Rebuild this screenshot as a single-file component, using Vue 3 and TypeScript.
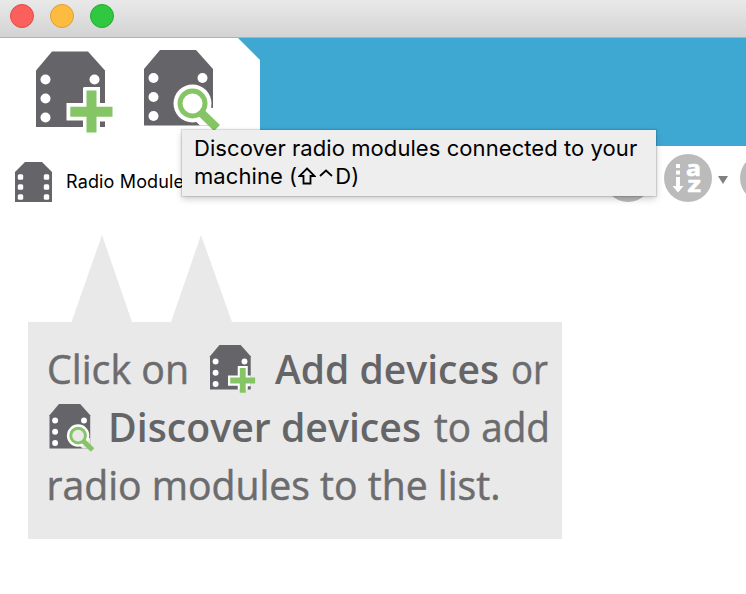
<script setup lang="ts">
interface Dot { x: number; y: number }

const windowButtons: string[] = ['close', 'minimize', 'zoom']
const dots: Dot[] = [
  { x: 9.5, y: 28 },
  { x: 9.5, y: 47 },
  { x: 9.5, y: 66 },
  { x: 58.5, y: 28 },
]
const listDots: Dot[] = [15, 25, 35].flatMap((y) => [{ x: 5.5, y }, { x: 31.5, y }])
</script>

<template>
  <div class="window">
    <svg class="defs" aria-hidden="true">
      <defs>
        <g id="module-body">
          <path d="M16 0H52L69 19V75.5H0V19Z" fill="#656468" />
          <circle v-for="(d, i) in dots" :key="i" :cx="d.x" :cy="d.y" r="5" fill="#fff" />
        </g>
        <g id="module-add">
          <use href="#module-body" />
          <path d="M48 35.500H64V51.500H69V70H64V76H47V69H30.500V51.500H47V36.500Z" fill="#fff" />
          <path d="M50.500 39H60.500V55.200H76.500V65.200H60.500V81H50.500V65.200H34.300V55.200H50.500Z" fill="#86c566" />
        </g>
        <g id="module-discover">
          <use href="#module-body" />
          <path d="M48 54L69 58V75.500H56L44 64Z" fill="#fff" />
          <circle cx="48.500" cy="53.500" r="19" fill="#fff" />
          <path d="M57.500 63L73 78" stroke="#86c566" stroke-width="8.500" />
          <circle cx="48.500" cy="53.500" r="12.500" fill="#fff" stroke="#86c566" stroke-width="5" />
        </g>
        <g id="hint-discover">
          <use href="#module-body" />
          <path d="M48 54L69 58V75.500H56L44 64Z" fill="#e9e9e9" />
          <circle cx="48.500" cy="53.500" r="19" fill="#fff" />
          <path d="M57.500 63L73 78" stroke="#86c566" stroke-width="8.500" />
          <circle cx="48.500" cy="53.500" r="12.500" fill="#e9e9e9" stroke="#86c566" stroke-width="5" />
        </g>
      </defs>
    </svg>

    <header class="titlebar">
      <span v-for="b in windowButtons" :key="b" class="light" :class="b"></span>
    </header>

    <div class="banner">
      <div class="tools">
        <svg class="tool" viewBox="0 0 80 86"><use href="#module-add" x="0" y="1.5" /></svg>
        <svg class="tool" viewBox="0 0 80 86"><use href="#module-discover" /></svg>
      </div>
    </div>

    <div class="listbar">
      <svg class="list-icon" viewBox="0 0 37 40">
        <path d="M10 0H27L37 10V40H0V10Z" fill="#656468" />
        <rect v-for="(d, i) in listDots" :key="i" :x="d.x - 2.7" :y="d.y - 2.7" width="5.4" height="5.4" rx="1.5" fill="#fff" />
      </svg>
      <span class="list-title">Radio Module</span>
      <div class="actions">
        <span class="round"></span>
        <span class="round">
          <svg class="sort" viewBox="0 0 48 48">
            <path d="M12 10h4v4h-4zM12 16.500h4v4h-4zM12 23h4v9h3.500l-5.500 6.500-5.500-6.500h3.500z" fill="#fff" />
            <text x="22" y="22" class="sort-letter" textLength="15" lengthAdjust="spacingAndGlyphs">a</text>
            <text x="23.500" y="38" class="sort-letter" textLength="13.500" lengthAdjust="spacingAndGlyphs">z</text>
          </svg>
        </span>
        <span class="caret"></span>
        <span class="round"></span>
      </div>
    </div>

    <svg class="callout" viewBox="28 235 534 304">
      <path d="M28 322H71.500L102 235L132 322H171L201 235L232 322H562V539H28Z" fill="#e9e9e9" />
      <g class="hint">
        <text x="47" y="384" textLength="142" lengthAdjust="spacingAndGlyphs">Click on</text>
        <text x="275" y="384" class="strong" textLength="224" lengthAdjust="spacingAndGlyphs">Add devices</text>
        <text x="511" y="384" textLength="37" lengthAdjust="spacingAndGlyphs">or</text>
        <text x="108" y="442" class="strong" textLength="313" lengthAdjust="spacingAndGlyphs">Discover devices</text>
        <text x="434" y="442" textLength="116" lengthAdjust="spacingAndGlyphs">to add</text>
        <text x="46.500" y="500" textLength="454" lengthAdjust="spacingAndGlyphs">radio modules to the list.</text>
      </g>
      <use href="#module-add" transform="translate(210 345) scale(.59)" />
      <use href="#hint-discover" transform="translate(49.500 404) scale(.59)" />
    </svg>

    <div class="tooltip" role="tooltip">
      <div>Discover radio modules connected to your</div>
      <div>machine (<svg class="shift" viewBox="0 0 18 18"><path d="M9 1.500L16.500 9H12.500V16.500H5.500V9H1.500Z" /></svg><svg class="control" viewBox="0 0 15 18"><path d="M1.500 9L7.500 3.500L13.500 9" /></svg>D)</div>
    </div>
  </div>
</template>

<style>
body { background: #fff; overflow: hidden; }
</style>

<style scoped>
.window { position: relative; width: 746px; height: 594px; overflow: hidden; background: #fff; font-family: Inter, "Liberation Sans", sans-serif; color: #000; }
.defs { position: absolute; width: 0; height: 0; }
.titlebar { box-sizing: border-box; height: 38px; display: flex; gap: 16px; padding: 4px 10px 0; background: linear-gradient(#e9e9e9, #d3d3d3); border-bottom: 1px solid #b1b1b1; }
.light { box-sizing: border-box; width: 24px; height: 24px; border-radius: 50%; border: 1px solid; }
.close { background: #fc605c; border-color: #df4b48; }
.minimize { background: #fdbc40; border-color: #dea035; }
.zoom { background: #2fc840; border-color: #26a934; }
.banner { height: 108px; background: #3ea8d3; }
.tools { box-sizing: border-box; width: 260px; height: 108px; display: flex; gap: 28px; padding: 12px 0 0 36px; background: #fff; clip-path: polygon(0 0, 238px 0, 100% 22px, 100% 100%, 0 100%); }
.tool { width: 80px; height: 86px; flex: none; }
.listbar { height: 64px; display: flex; align-items: center; padding-left: 15px; }
.list-icon { width: 37px; height: 40px; margin-top: 8px; flex: none; }
.list-title { font-size: 18px; line-height: 24px; margin: 7px 0 0 14px; width: 130px; flex: none; letter-spacing: 0.15px; white-space: nowrap; }
.actions { display: flex; align-items: center; margin-left: 408px; flex: none; }
.round { width: 48px; height: 48px; border-radius: 50%; background: #bbb; flex: none; }
.round + .round { margin-left: 12px; }
.sort { display: block; width: 48px; height: 48px; }
.sort-letter { font: bold 22px "Open Sans", sans-serif; fill: #fff; stroke: #fff; stroke-width: 0.6px; }
.caret { width: 10px; height: 8px; margin: 4px 12px 0 6px; background: #808080; clip-path: polygon(0 0, 100% 0, 50% 100%); }
.callout { display: block; width: 534px; height: 304px; margin: 25px 0 0 28px; }
.hint { font-family: "Open Sans", sans-serif; font-size: 40px; fill: #6c6c6e; stroke: #6c6c6e; stroke-width: 0.5px; }
.strong { font-weight: 600; fill: #656567; stroke: none; }
.tooltip { position: absolute; left: 182px; top: 130px; box-sizing: border-box; width: 474px; height: 66px; padding: 4px 12px; background: #eeeeee; font-size: 22px; line-height: 28px; letter-spacing: 0.07px; white-space: nowrap; box-shadow: 0 0 1px 1px rgba(0, 0, 0, 0.12), 0 3px 7px rgba(0, 0, 0, 0.2); }
.shift { width: 18px; height: 18px; margin: 0 1px; vertical-align: -1px; }
.control { width: 16px; height: 18px; margin: 0 1px; vertical-align: -1px; }
.shift path, .control path { fill: none; stroke: #000; stroke-width: 1.8; }
</style>
